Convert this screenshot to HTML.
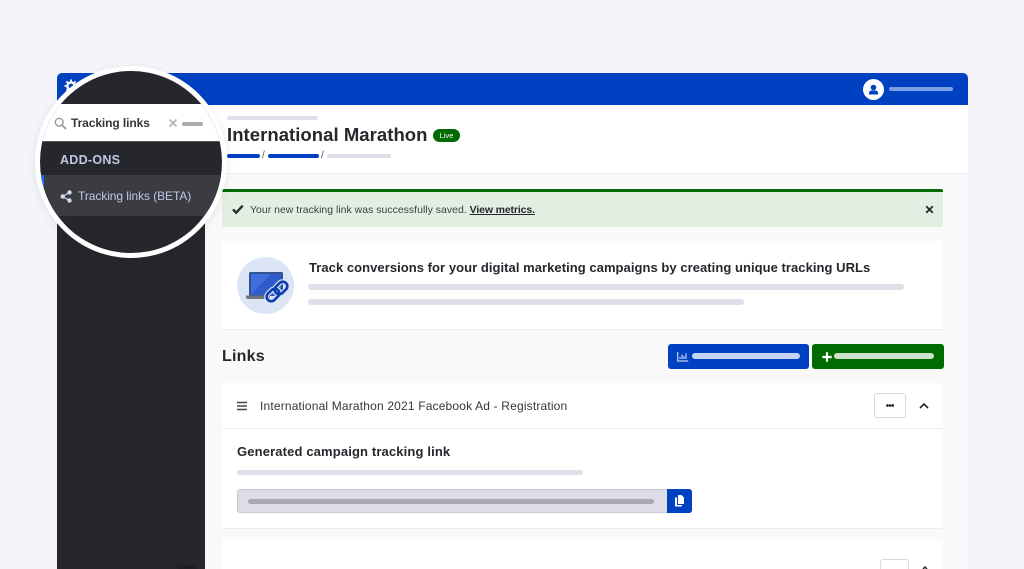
<!DOCTYPE html>
<html style="width:1024px;height:569px;overflow:hidden"><head><meta charset="utf-8">
<style>
html,body{margin:0;padding:0}
body{width:1024px;height:569px;overflow:hidden;background:#f4f4fa;font-family:"Liberation Sans",sans-serif;color:#1f2126}
#w{position:absolute;left:0;top:0;width:1024px;height:569px;overflow:hidden;background:#f4f4fa}
.a{position:absolute}
.t{position:absolute;white-space:nowrap;line-height:1}
.b{position:absolute;border-radius:3px}
</style></head><body><div id="w">
<div class="a" style="left:57px;top:73px;width:911px;height:496px;background:#f9f9f9;border-radius:5px 5px 0 0;overflow:hidden"></div>
<div class="a" style="left:57px;top:73px;width:911px;height:32px;background:#0041c2;border-radius:5px 5px 0 0"></div>
<svg class="a" style="left:64px;top:79px" width="14" height="14" viewBox="0 0 14 14"><circle cx="7" cy="7" r="3.600" fill="none" stroke="#fff" stroke-width="2.400"/><path d="M7 .5v3M7 10.500v3M.5 7h3M10.500 7h3M2.400 2.400l2 2M9.600 9.600l2 2M11.600 2.400l-2 2M4.400 9.600l-2 2" stroke="#fff" stroke-width="1.800"/></svg>
<div class="a" style="left:57px;top:105px;width:148px;height:464px;background:#25272c"></div>
<div class="a" style="left:177px;top:565px;width:20px;height:4px;background:#1f2024"></div>
<div class="a" style="left:205px;top:105px;width:763px;height:69px;background:#fff;border-bottom:1px solid #eee;box-sizing:border-box"></div>

<div class="a" style="left:863px;top:79px;width:21px;height:21px;background:#fff;border-radius:50%"></div>
<svg class="a" style="left:863px;top:79px" width="21" height="21" viewBox="0 0 21 21"><circle cx="10.500" cy="8.500" r="2.800" fill="#0041c2"/><path d="M6 15.500v-1.500a2.500 2.500 0 0 1 2.500-2.500h4a2.500 2.500 0 0 1 2.500 2.500v1.500z" fill="#0041c2"/></svg>
<div class="b" style="left:889px;top:87px;width:64px;height:4px;background:#7d9fe4"></div>

<div class="b" style="left:227px;top:116px;width:91px;height:4px;background:#dfdfea"></div>
<div class="t" style="left:227px;top:126px;font-size:18.500px;font-weight:700;letter-spacing:.05px;color:#25272c">International Marathon</div>
<div class="a" style="left:433px;top:129px;width:27px;height:13px;border-radius:7px;background:#006b00;color:#fff;font-size:7.500px;line-height:13px;text-align:center">Live</div>
<div class="b" style="left:227px;top:154px;width:33px;height:4px;background:#0041c2"></div>
<div class="t" style="left:262px;top:151px;font-size:10px;color:#555">/</div>
<div class="b" style="left:268px;top:154px;width:51px;height:4px;background:#0041c2"></div>
<div class="t" style="left:321px;top:151px;font-size:10px;color:#555">/</div>
<div class="b" style="left:327px;top:154px;width:64px;height:4px;background:#dfdfea"></div>

<div class="a" style="left:222px;top:189px;width:721px;height:38px;background:#e2eee2;border-top:3px solid #006b00;box-sizing:border-box;border-radius:2px"></div>
<svg class="a" style="left:232px;top:204px" width="12" height="11" viewBox="0 0 12 11"><path d="M1 5.500l3.200 3.200 6.500-7" fill="none" stroke="#25272c" stroke-width="2.300"/></svg>
<div class="t" style="left:250px;top:205px;font-size:10.500px;line-height:11px;color:#3c3e44">Your new tracking link was successfully saved. <span style="color:#25272c;text-decoration:underline;font-weight:700;letter-spacing:-.13px">View metrics.</span></div>
<svg class="a" style="left:925px;top:205px" width="9" height="9" viewBox="0 0 9 9"><path d="M1.200 1.200l6.600 6.600M7.800 1.200l-6.600 6.600" stroke="#25272c" stroke-width="1.800"/></svg>

<div class="a" style="left:222px;top:241px;width:721px;height:89px;background:#fff;border-bottom:1px solid #eee;box-sizing:border-box"></div>
<svg class="a" style="left:237px;top:257px" width="57" height="57" viewBox="0 0 57 57">
<circle cx="28.500" cy="28.500" r="28.500" fill="#dbe5f6"/>
<rect x="12" y="15" width="34" height="24" rx="1.500" fill="#33518f"/>
<path d="M14 17h30v21H14z" fill="#3f6fdc"/>
<path d="M14 38L34 17h10v5L28 38z" fill="#2e5bc7"/>
<path d="M9 38.500h24v2.500a1 1 0 0 1-1 1H11a2 2 0 0 1-2-2z" fill="#6f7480"/>
<g fill="none" stroke="#dbe5f6" stroke-width="5"><rect x="29" y="33.500" width="14" height="9" rx="4.500" transform="rotate(-45 36 38)"/><rect x="37" y="26.500" width="14" height="9" rx="4.500" transform="rotate(-45 44 31)"/></g>
<g fill="none" stroke="#0b3fae" stroke-width="2.700"><rect x="29" y="33.500" width="14" height="9" rx="4.500" transform="rotate(-45 36 38)"/><rect x="37" y="26.500" width="14" height="9" rx="4.500" transform="rotate(-45 44 31)"/></g>
</svg>
<div class="t" style="left:309px;top:261px;font-size:13px;font-weight:700;letter-spacing:.05px;color:#25272c">Track conversions for your digital marketing campaigns by creating unique tracking URLs</div>
<div class="b" style="left:308px;top:284px;width:596px;height:6px;background:#dfdfea"></div>
<div class="b" style="left:308px;top:299px;width:436px;height:6px;background:#dfdfea"></div>

<div class="t" style="left:222px;top:349px;font-size:16px;font-weight:700;letter-spacing:.2px;color:#25272c">Links</div>
<div class="a" style="left:668px;top:344px;width:141px;height:25px;background:#0041c2;border-radius:3px"></div>
<svg class="a" style="left:677px;top:351px" width="12" height="11" viewBox="0 0 12 11"><path d="M.7 1v9h10.500M3 8V6M5 8V3.500M7 8V5M9 8V2.500" fill="none" stroke="#c5d4f3" stroke-width="1.200"/></svg>
<div class="b" style="left:692px;top:353px;width:108px;height:6px;background:#c5d4f3"></div>
<div class="a" style="left:812px;top:344px;width:132px;height:25px;background:#006b00;border-radius:3px"></div>
<svg class="a" style="left:822px;top:352px" width="10" height="10" viewBox="0 0 10 10"><path d="M5 .3v9.400M.3 5h9.400" stroke="#fff" stroke-width="2.200"/></svg>
<div class="b" style="left:834px;top:353px;width:100px;height:6px;background:#cce0cc"></div>

<div class="a" style="left:222px;top:383px;width:721px;height:146px;background:#fff;border-bottom:1px solid #eee;box-sizing:border-box"></div>
<div class="a" style="left:222px;top:428px;width:721px;height:1px;background:#eee"></div>
<svg class="a" style="left:237px;top:401px" width="10" height="10" viewBox="0 0 10 10"><path d="M0 1.500h10M0 5h10M0 8.500h10" stroke="#44464c" stroke-width="1.400"/></svg>
<div class="t" style="left:260px;top:400px;font-size:12px;letter-spacing:.17px;color:#33353a">International Marathon 2021 Facebook Ad - Registration</div>
<div class="a" style="left:874px;top:393px;width:32px;height:25px;border:1px solid #d8d8de;box-sizing:border-box;border-radius:3px;background:#fff"></div>
<div class="a" style="left:886px;top:404px;width:8px;height:3px;background:radial-gradient(circle at 1.400px 1.500px,#25272c 1.300px,transparent 1.400px) 0 0/2.700px 3px"></div>
<svg class="a" style="left:919px;top:402px" width="10" height="8" viewBox="0 0 10 8"><path d="M1 6l4-4 4 4" fill="none" stroke="#25272c" stroke-width="1.600"/></svg>
<div class="t" style="left:237px;top:445px;font-size:13px;font-weight:700;letter-spacing:.14px;color:#25272c">Generated campaign tracking link</div>
<div class="b" style="left:237px;top:470px;width:346px;height:5px;background:#dfdfea"></div>
<div class="a" style="left:237px;top:489px;width:455px;height:24px;background:#dddde8;border:1px solid #c9c9d4;box-sizing:border-box;border-radius:3px"></div>
<div class="b" style="left:248px;top:499px;width:406px;height:5px;background:#a9a9b5"></div>
<div class="a" style="left:667px;top:489px;width:25px;height:24px;background:#0041c2;border-radius:0 3px 3px 0"></div>
<svg class="a" style="left:674px;top:495px" width="11" height="12" viewBox="0 0 11 12"><path d="M4 0h3.500L10 2.500V9H4z" fill="#fff"/><path d="M1 2.500h2V10h5v1.500H1z" fill="#fff"/></svg>

<div class="a" style="left:222px;top:539px;width:721px;height:30px;background:#fff"></div>
<div class="a" style="left:880px;top:559px;width:29px;height:20px;border:1px solid #d8d8de;box-sizing:border-box;border-radius:3px;background:#fff"></div>
<svg class="a" style="left:920px;top:565px" width="10" height="4" viewBox="0 0 10 4"><path d="M3 4l2-2 2 2" fill="none" stroke="#25272c" stroke-width="1.500"/></svg>

<!-- magnifier -->
<div class="a" style="left:35px;top:66px;width:192px;height:192px;border-radius:50%;background:#fff;box-shadow:0 2px 8px rgba(40,40,60,.1)"></div>
<div class="a" style="left:40px;top:71px;width:182px;height:182px;border-radius:50%;overflow:hidden;background:#25272c">
  <div class="a" style="left:0;top:33px;width:182px;height:37px;background:#fff;border-bottom:1px solid #555"></div>
  <div class="a" style="left:0;top:104px;width:182px;height:41px;background:#3a3c42"></div>
  <div class="a" style="left:0;top:104px;width:4px;height:30px;background:#1f6fe8"></div>
  <svg class="a" style="left:14px;top:46px" width="13" height="13" viewBox="0 0 13 13"><circle cx="5.200" cy="5.200" r="3.900" fill="none" stroke="#9a9a9f" stroke-width="1.400"/><path d="M8 8l4 4" stroke="#9a9a9f" stroke-width="1.800"/></svg>
  <div class="t" style="left:31px;top:46px;font-size:12px;font-weight:700;letter-spacing:-.09px;color:#33353a">Tracking links</div>
  <svg class="a" style="left:128px;top:47px" width="10" height="10" viewBox="0 0 10 10"><path d="M1.500 1.500l7 7M8.500 1.500l-7 7" stroke="#b5b5b8" stroke-width="1.800"/></svg>
  <div class="b" style="left:142px;top:51px;width:21px;height:4px;background:#aaa"></div>
  <div class="t" style="left:20px;top:83px;font-size:12.500px;font-weight:700;letter-spacing:.27px;color:#c3c6e6">ADD-ONS</div>
  <svg class="a" style="left:20px;top:119px" width="12" height="13" viewBox="0 0 12 13"><path d="M2.500 6.500L9.500 2.500M2.500 6.500l7 4" stroke="#d6d8ee" stroke-width="1.200"/><circle cx="2.700" cy="6.500" r="2.200" fill="#d6d8ee"/><circle cx="9.500" cy="2.500" r="2.200" fill="#d6d8ee"/><circle cx="9.500" cy="10.500" r="2.200" fill="#d6d8ee"/></svg>
  <div class="t" style="left:38px;top:119px;font-size:12px;letter-spacing:-.07px;color:#c3c6e6">Tracking links (BETA)</div>
</div>
</div></body></html>
